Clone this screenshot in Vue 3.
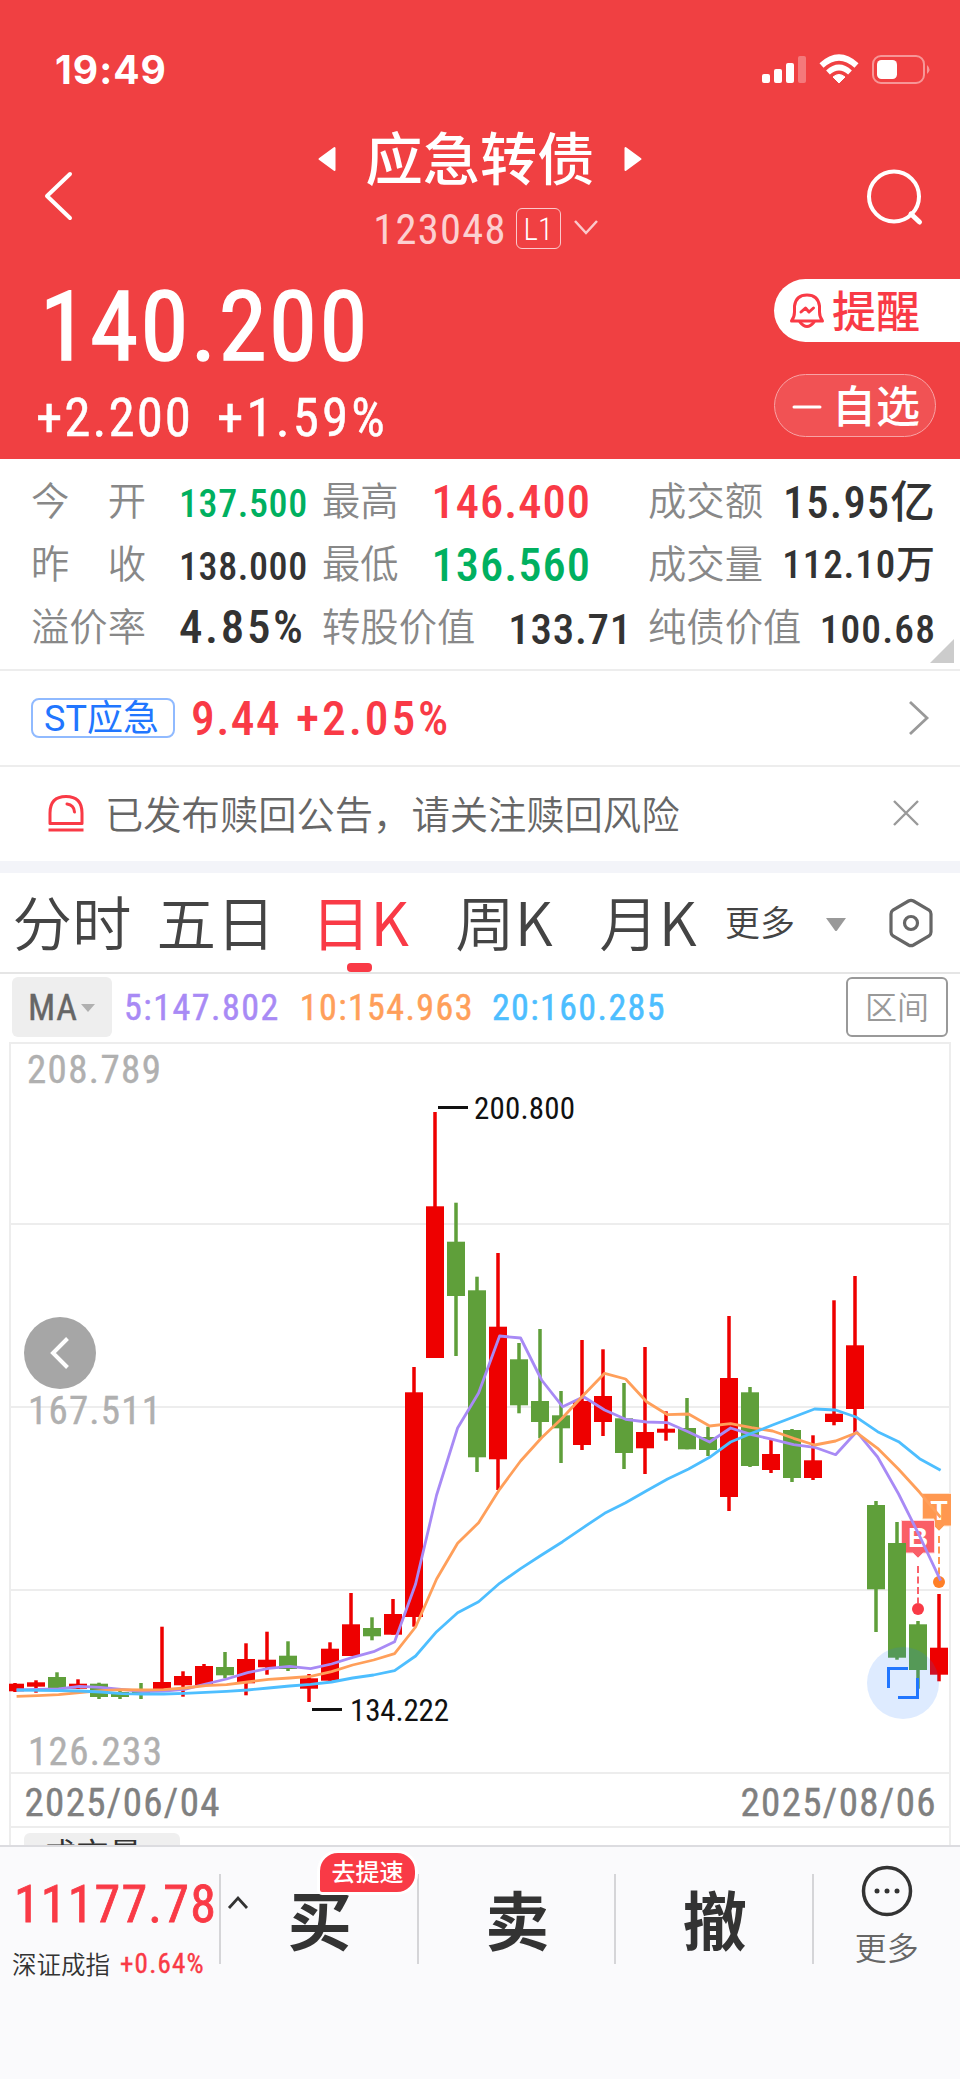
<template>
  <div class="page">
    <header class="header">
      <div class="status-bar">
        <span class="time">19:49</span>
        <svg class="status-icons" width="172" height="34" viewBox="0 0 172 34">
          <g fill="#fff">
            <rect x="2" y="22" width="8" height="9" rx="2" />
            <rect x="14" y="17" width="8" height="14" rx="2" />
            <rect x="26" y="11" width="8" height="20" rx="2" />
            <rect x="38" y="4" width="8" height="27" rx="2" opacity="0.3" />
            <path d="M79 31 L73 25 Q79 20 85 25 Z" stroke="#fff" stroke-linejoin="round" />
          </g>
          <path d="M68 20.5 Q79 10.5 90 20.5" fill="none" stroke="#fff" stroke-width="5.6" />
          <path d="M61.5 13.5 Q79 -2.5 96.5 13.5" fill="none" stroke="#fff" stroke-width="6" />
          <rect x="113" y="4" width="51" height="27" rx="8" fill="none" stroke="#fff" stroke-width="2" opacity="0.45" />
          <rect x="117" y="8" width="20" height="19" rx="4.5" fill="#fff" />
          <path d="M167 13 q5 4.500 0 9 z" fill="#fff" opacity="0.45" />
        </svg>
      </div>

      <div class="title-bar">
        <svg width="40" height="60" viewBox="0 0 40 60">
          <path d="M33 8 L10 30 L33 52" fill="none" stroke="#fff" stroke-width="4" stroke-linecap="round" stroke-linejoin="round" />
        </svg>
        <div class="title-main">
          <div class="title-row">
            <svg width="18" height="28" viewBox="0 0 18 28">
              <path d="M16.500 3 V25 L1.500 14 Z" fill="#fff" stroke="#fff" stroke-width="2" stroke-linejoin="round" />
            </svg>
            <h1>应急转债</h1>
            <svg width="18" height="28" viewBox="0 0 18 28">
              <path d="M1.500 3 V25 L16.500 14 Z" fill="#fff" stroke="#fff" stroke-width="2" stroke-linejoin="round" />
            </svg>
          </div>
          <div class="code-row">
            <span class="num code">123048</span>
            <span class="level num">L1</span>
            <svg width="26" height="18" viewBox="0 0 26 18">
              <path d="M2 2 L13 14 L24 2" fill="none" stroke="#fbc9cb" stroke-width="2.500" />
            </svg>
          </div>
        </div>
        <svg width="62" height="62" viewBox="0 0 62 62">
          <circle cx="30" cy="30.500" r="25" fill="none" stroke="#fff" stroke-width="4" />
          <path d="M47 48 L55.500 56" stroke="#fff" stroke-width="5" stroke-linecap="round" />
        </svg>
      </div>

      <div class="quote">
        <div>
          <div class="num price">140.200</div>
          <div class="change">
            <span class="num">+2.200</span>
            <span class="num percent">+1.59%</span>
          </div>
        </div>
        <div class="actions">
          <div class="action remind">
            <svg width="36" height="38" viewBox="0 0 36 38">
              <g fill="none" stroke="#f93a46" stroke-width="3" stroke-linecap="round" stroke-linejoin="round">
                <path d="M2.500 29 Q5.500 25 5.500 20 V14 Q7 3 18 3 Q29 3 30.500 14 V20 Q30.500 25 33.500 29 Z" />
                <path d="M11 30 Q18 39 25 30" />
                <path d="M12 20 L16.500 16 L20 20 L24.500 16" />
              </g>
            </svg>
            <span>提醒</span>
          </div>
          <div class="action watch">
            <svg width="36" height="38" viewBox="0 0 36 38">
              <path d="M5 20 H31" stroke="#fff" stroke-width="3" stroke-linecap="round" />
            </svg>
            <span>自选</span>
          </div>
        </div>
      </div>
    </header>

    <section class="stats">
      <div v-for="(row, r) in stats" :key="r" class="stats-row">
        <div v-for="cell in row" :key="cell.label" class="stat">
          <span class="stat-label" :class="{ spread: cell.spread }">
            <i v-for="ch in cell.label" :key="ch">{{ ch }}</i>
          </span>
          <span class="num stat-value" :class="[cell.size, cell.color]">{{ cell.value }}</span>
        </div>
      </div>
      <span class="corner"></span>
    </section>

    <section class="stock">
      <span class="tag">ST应急</span>
      <span class="num stock-price">9.44</span>
      <span class="num stock-change">+2.05%</span>
      <svg class="push" width="22" height="36" viewBox="0 0 22 36">
        <path d="M2 2 L19 18 L2 34" fill="none" stroke="#999" stroke-width="2.800" />
      </svg>
    </section>

    <section class="notice">
      <svg width="38" height="38" viewBox="0 0 38 38">
        <g fill="none" stroke="#f93a46" stroke-width="3">
          <path d="M3 29.500 V19 Q3 2.500 19 2.500 Q35 2.500 35 19 V29.500 Z" stroke-linejoin="round" />
          <path d="M1.500 36 H36.500" />
          <path d="M20 10 Q27 11 27.500 18" stroke-linecap="round" />
        </g>
      </svg>
      <span class="notice-text">已发布赎回公告，请关注赎回风险</span>
      <svg class="push" width="30" height="30" viewBox="0 0 30 30">
        <path d="M3 3 L27 27 M27 3 L3 27" stroke="#999" stroke-width="2.400" />
      </svg>
    </section>

    <nav class="tabs">
      <span v-for="tab in tabs" :key="tab" class="tab" :class="{ active: tab === activeTab }">{{ tab }}</span>
      <span class="tab-more">更多</span>
      <svg class="tab-caret" width="22" height="16" viewBox="0 0 22 16">
        <path d="M1 2 H21 L12 14.500 Q11 15.500 10 14.500 Z" fill="#999" />
      </svg>
      <svg width="46" height="50" viewBox="0 0 46 50">
        <path d="M20.500 3 Q23 1.700 25.500 3 L41 12 Q43 13.500 43 16 V34 Q43 36.500 41 38 L25.500 47 Q23 48.300 20.500 47 L5 38 Q3 36.500 3 34 V16 Q3 13.500 5 12 Z" fill="none" stroke="#666" stroke-width="3.200" />
        <circle cx="23" cy="25" r="6.500" fill="none" stroke="#666" stroke-width="3.200" />
      </svg>
    </nav>

    <section class="indicators">
      <span class="ma-button num">
        MA
        <svg width="16" height="10" viewBox="0 0 16 10"><path d="M1 1 H15 L8 9 Z" fill="#b0b0b0" /></svg>
      </span>
      <span class="num ma ma5">5:147.802</span>
      <span class="num ma ma10">10:154.963</span>
      <span class="num ma ma20">20:160.285</span>
      <span class="range">区间</span>
    </section>

    <section class="chart">
      <svg width="960" height="806" viewBox="0 1040 960 806">
        <defs>
          <clipPath id="plot"><rect x="9" y="1041" width="942" height="806" /></clipPath>
        </defs>
        <g stroke="#ededed" stroke-width="2">
          <path d="M10 1846 V1043 H950 V1846" fill="none" />
          <path v-for="y in gridLines" :key="y" :d="`M10 ${y} H950`" />
        </g>

        <g class="axis">
          <text x="27" y="1083" textLength="134">208.789</text>
          <text x="28" y="1424" textLength="133">167.511</text>
          <text x="28" y="1765" textLength="134">126.233</text>
          <text class="date" x="24.500" y="1816" textLength="195">2025/06/04</text>
          <text class="date" x="740.500" y="1816" textLength="195">2025/08/06</text>
        </g>

        <g clip-path="url(#plot)">
          <!-- trade markers -->
          <g stroke-width="2" stroke-dasharray="7 3.500">
            <path d="M939 1536 V1576" stroke="#ff9850" />
            <path d="M918 1566 V1603" stroke="#f9616b" />
          </g>
          <path d="M922.500 1493.500 H955 V1526 H944 L939 1531 L934 1526 V1519 H922.500 Z" fill="#ff9850" stroke="#ffe3cf" />
          <text class="mark" x="939" y="1520">T</text>
          <path d="M901.500 1520.500 H934.500 V1553 H923 L918 1558 L913 1553 H901.500 Z" fill="#f93a46" fill-opacity="0.82" stroke="#ffd9dc" />
          <text class="mark" x="918" y="1547">B</text>
          <circle cx="939" cy="1582" r="6" fill="#ff7f27" />
          <circle cx="918" cy="1609" r="6" fill="#f93a46" />

          <g v-for="c in candles" :key="c.x" :fill="c.color">
            <rect :x="c.x - 1.75" :y="c.high" width="3.500" :height="c.low - c.high" />
            <rect :x="c.x - 9" :y="c.top" width="18" :height="c.bottom - c.top" />
          </g>
          <polyline v-for="line in averages" :key="line.color" :points="line.points" fill="none" :stroke="line.color" stroke-width="2.800" stroke-linejoin="round" />
        </g>

        <g class="peak">
          <path d="M438 1107.500 H468 M312 1709.500 H342" stroke="#111" stroke-width="3" />
          <text x="474" y="1119" textLength="101">200.800</text>
          <text x="350" y="1721" textLength="99">134.222</text>
        </g>

        <circle cx="60" cy="1353" r="36" fill="#a6a6a6" />
        <path d="M67.500 1338.500 L53 1353 L67.500 1367.500" fill="none" stroke="#fff" stroke-width="4" />

        <circle cx="903" cy="1683" r="36" fill="#2176ff" fill-opacity="0.15" />
        <path d="M888.500 1688 V1668.500 H908 M917.500 1678 V1697.500 H898" fill="none" stroke="#2176ff" stroke-width="3" />

        <rect x="24" y="1833" width="156" height="40" rx="6" fill="#efefef" />
        <text class="volume" x="43" y="1867">成交量</text>
      </svg>
    </section>

    <footer class="footer">
      <div class="index">
        <span class="num index-value">11177.78</span>
        <div class="index-sub">
          <span>深证成指</span>
          <span class="num index-change">+0.64%</span>
        </div>
      </div>
      <div class="trade buy">
        <svg class="expand" width="22" height="16" viewBox="0 0 22 16">
          <path d="M2 14 L11 4 L20 14" fill="none" stroke="#333" stroke-width="2.800" />
        </svg>
        买
        <span class="badge">去提速</span>
      </div>
      <div class="trade">卖</div>
      <div class="trade">撤</div>
      <div class="more">
        <svg width="54" height="54" viewBox="0 0 54 54">
          <circle cx="27" cy="27" r="23.500" fill="none" stroke="#333" stroke-width="3.500" />
          <g fill="#333">
            <circle cx="17" cy="27" r="2.500" />
            <circle cx="27" cy="27" r="2.500" />
            <circle cx="37" cy="27" r="2.500" />
          </g>
        </svg>
        <span>更多</span>
      </div>
    </footer>
  </div>
</template>

<script setup>
import { ref } from 'vue'

const tabs = ['分时', '五日', '日K', '周K', '月K']
const activeTab = ref('日K')

const stats = [
  [
    { label: '今开', value: '137.500', size: 's38', color: 'down', spread: true },
    { label: '最高', value: '146.400', size: 's47', color: 'up' },
    { label: '成交额', value: '15.95亿', size: 's45' },
  ],
  [
    { label: '昨收', value: '138.000', size: 's38', spread: true },
    { label: '最低', value: '136.560', size: 's47', color: 'down' },
    { label: '成交量', value: '112.10万', size: 's39' },
  ],
  [
    { label: '溢价率', value: '4.85%', size: 's46' },
    { label: '转股价值', value: '133.71', size: 's43' },
    { label: '纯债价值', value: '100.68', size: 's40' },
  ],
]

const gridLines = [1224, 1407, 1590, 1773, 1827]

// [direction, body top, body bottom, wick top, wick bottom]
const bars = [
  [1, 1683.7, 1691.3, 1683, 1692],
  [1, 1682.3, 1686.7, 1680.3, 1692.7],
  [0, 1677, 1688, 1672.3, 1688],
  [1, 1683.7, 1688.7, 1679.3, 1688.7],
  [0, 1683.7, 1697, 1682.7, 1699],
  [0, 1692, 1697, 1690, 1699],
  [0, 1691.3, 1694, 1683, 1699],
  [1, 1682, 1690, 1626.7, 1690],
  [1, 1676, 1685.3, 1671.3, 1696.7],
  [1, 1666, 1685.3, 1664, 1685.3],
  [0, 1667, 1675.3, 1652, 1678.3],
  [1, 1659, 1683.3, 1643.3, 1695.3],
  [1, 1659.7, 1667.3, 1631.7, 1674.7],
  [0, 1655.7, 1669, 1641.3, 1671],
  [1, 1678.3, 1688.7, 1674, 1702],
  [1, 1648.7, 1680.7, 1642.3, 1682.7],
  [1, 1624.3, 1656, 1593, 1656],
  [0, 1628, 1636.3, 1617.3, 1640.3],
  [1, 1614, 1634.7, 1599, 1634.7],
  [1, 1392.3, 1617, 1367, 1626.7],
  [1, 1206.3, 1358, 1112, 1358],
  [0, 1241.7, 1296, 1202.7, 1356],
  [0, 1290.3, 1457.3, 1276.7, 1472],
  [1, 1326.7, 1459.3, 1253, 1490],
  [0, 1359.3, 1405.3, 1343, 1413.3],
  [0, 1401, 1422, 1329, 1438.3],
  [0, 1415.3, 1428.3, 1391, 1463],
  [1, 1401, 1445, 1340, 1450],
  [1, 1396, 1422, 1349.3, 1436],
  [0, 1418.3, 1453, 1383, 1469],
  [1, 1432, 1448.3, 1347, 1474],
  [1, 1428.7, 1432.7, 1411.3, 1440.7],
  [0, 1428, 1449.3, 1398, 1449.3],
  [0, 1437, 1450, 1426.7, 1456],
  [1, 1378, 1497, 1316, 1511],
  [0, 1392.3, 1466, 1387, 1467],
  [1, 1454, 1470, 1440, 1473],
  [0, 1430, 1478, 1429, 1482],
  [1, 1460.3, 1478, 1435.3, 1480],
  [1, 1413.7, 1422, 1300.3, 1425.3],
  [1, 1345.3, 1409, 1276, 1433.3],
  [0, 1505, 1589.3, 1501, 1632],
  [0, 1543, 1657.7, 1522, 1659.7],
  [0, 1624.3, 1670, 1621, 1688.7],
  [1, 1647.7, 1674.7, 1594, 1681.3],
]

const candles = bars.map(([up, top, bottom, high, low], i) => ({
  x: 15 + i * 21,
  top,
  bottom,
  high,
  low,
  color: up ? '#ee0000' : '#5f9f3a',
}))

const ma5 = [
  1690, 1689.3, 1689, 1686.3, 1687.3, 1689.3, 1691.5, 1691, 1689.3, 1684, 1679, 1672.7, 1668.3, 1666.3, 1668.7,
  1664, 1657.3, 1651.7, 1641.7, 1584, 1495, 1428, 1393, 1336, 1338, 1380, 1406.7, 1396.7, 1410, 1419.3,
  1422, 1422.7, 1432, 1442, 1428, 1434.7, 1439.3, 1444.7, 1447.3, 1454.7, 1431.7, 1457, 1494, 1536, 1580.7,
]
const ma10 = [
  1696.3, 1695.7, 1694.7, 1692.7, 1690.7, 1689.7, 1690, 1689.7, 1688, 1685.7, 1684.7, 1682, 1679.3, 1678, 1676.3,
  1671.7, 1665, 1660, 1653.7, 1627, 1579, 1543.3, 1522.7, 1489.3, 1461, 1437.7, 1417.7, 1395, 1373.3, 1379,
  1401.7, 1414.7, 1414, 1426, 1423.7, 1427.7, 1431, 1438.3, 1445, 1441, 1432.7, 1448.3, 1469.3, 1492.3, 1517.3,
]
const ma20 = [
  1690, 1690.3, 1690.7, 1691, 1692, 1693.7, 1694, 1694, 1693.3, 1692.3, 1691.3, 1690, 1688, 1686, 1684.3,
  1682, 1678, 1675, 1670.7, 1656, 1631.7, 1612.7, 1601.7, 1583.3, 1568.7, 1555, 1541.7, 1527.3, 1513.3, 1502.7,
  1490.7, 1479, 1469, 1457.3, 1442, 1433.3, 1425, 1417, 1409, 1410, 1417.3, 1431.7, 1441.7, 1458.7, 1470.3,
]

const toPoints = (values) => values.map((y, i) => `${(16.6 + i * 21).toFixed(1)},${y}`).join(' ')

const averages = [
  { color: '#a88af5', points: toPoints(ma5) },
  { color: '#ff9f5a', points: toPoints(ma10) },
  { color: '#4dbeff', points: toPoints(ma20) },
]
</script>

<style>
body {
  margin: 0;
  background: #fff;
}
</style>

<style scoped>
.page {
  width: 960px;
  height: 2079px;
  overflow: hidden;
  display: flex;
  flex-direction: column;
  background: #fff;
  color: #333;
  font-family: 'Noto Sans CJK SC', sans-serif;
}

.page > * {
  box-sizing: border-box;
  flex-shrink: 0;
}

svg {
  display: block;
  flex-shrink: 0;
}

.num {
  font-family: 'Roboto Condensed', Roboto, 'Noto Sans CJK SC', sans-serif;
  line-height: 1;
  white-space: nowrap;
}

/* Header */
.header {
  height: 459px;
  background: #f04042;
  color: #fff;
}

.status-bar {
  display: flex;
  justify-content: space-between;
  align-items: flex-start;
  height: 120px;
  padding: 51px 28px 0 55px;
  box-sizing: border-box;
}

.time {
  font: 700 39px/38px Inter, sans-serif;
  letter-spacing: 1px;
}

.status-icons {
  margin-top: 1px;
}

.title-bar {
  display: flex;
  justify-content: space-between;
  height: 139px;
  padding: 0 34px 0 37px;
}

.title-bar > svg {
  margin-top: 46px;
}

.title-bar > svg:first-child {
  margin-right: 19px;
}

.title-row {
  display: flex;
  justify-content: center;
  align-items: center;
  gap: 30px;
  height: 78px;
}

.title-row h1 {
  margin: -8px 0 0;
  font-size: 57.2px;
  font-weight: 500;
  line-height: 78px;
}

.code-row {
  display: flex;
  align-items: center;
  justify-content: center;
  height: 60px;
  padding-left: 12px;
}

.code {
  font-size: 42.5px;
  font-weight: 400;
  letter-spacing: 1.3px;
  color: #fcd0d1;
  margin-top: 4px;
}

.level {
  width: 43px;
  height: 39px;
  margin: 0 12px 0 9px;
  border: 1.5px solid #fbc9cb;
  border-radius: 6px;
  font-size: 31px;
  font-weight: 300;
  line-height: 41px;
  text-align: center;
}

.quote {
  display: flex;
  justify-content: space-between;
  padding: 20px 0 0 36px;
}

.price {
  height: 97px;
  margin-left: 4px;
  font-size: 97px;
  letter-spacing: 2.4px;
  -webkit-text-stroke: 1.6px #fff;
}

.change {
  display: flex;
  gap: 24px;
  margin-top: 16px;
  font-size: 53px;
}

.change .num {
  letter-spacing: 2px;
  -webkit-text-stroke: 0.5px #fff;
}

.change .percent {
  letter-spacing: 3.1px;
}

.actions {
  display: flex;
  flex-direction: column;
  gap: 32px;
}

.action {
  display: flex;
  align-items: center;
  box-sizing: border-box;
  height: 63px;
  padding-left: 15px;
  font-size: 44px;
  font-weight: 500;
  line-height: 58px;
}

.action span {
  margin: -4px 0 0 7px;
}

.remind {
  width: 186px;
  border-radius: 32px 0 0 32px;
  background: #fff;
  color: #f93a46;
}

.watch {
  width: 162px;
  padding-left: 14px;
  border: 1.5px solid #f8a3a5;
  border-radius: 32px;
  background: #f15254;
}

/* Key figures */
.stats {
  position: relative;
  height: 212px;
  padding: 10px 25px 0 31px;
  border-bottom: 2px solid #ededed;
}

.stats-row {
  display: grid;
  grid-template-columns: 291px 326px 288px;
  height: 63px;
}

.stat {
  display: flex;
  align-items: center;
  justify-content: space-between;
}

.stat-label {
  display: flex;
  margin-top: -4px;
  font-size: 38.3px;
  font-weight: 350;
  line-height: 56px;
  color: #888;
}

.stat-label i {
  font-style: normal;
}

.spread {
  width: 115px;
  justify-content: space-between;
}

.stat-value {
  font-weight: 500;
}

.stat:nth-child(1) .stat-value {
  width: 143px;
}

.stat:nth-child(2) .stat-value {
  margin-right: 16px;
}

.stats-row:nth-child(-n + 2) .stat:nth-child(2) .stat-value {
  margin-right: 57px;
}

.s38 {
  font-size: 38px;
  letter-spacing: 0.6px;
  margin-top: 6px;
}

.s39 {
  font-size: 39px;
  letter-spacing: 0.9px;
  margin-top: 4px;
}

.s40 {
  font-size: 39.5px;
  letter-spacing: 1.1px;
  margin-top: 6px;
}

.s43 {
  font-size: 43px;
  letter-spacing: 0.7px;
  margin-top: 5px;
}

.s45 {
  font-size: 44.5px;
  letter-spacing: 1.2px;
  margin-top: 6px;
}

.s46 {
  font-size: 47px;
  letter-spacing: 2.6px;
}

.s47 {
  font-size: 46.5px;
  letter-spacing: 1px;
  margin-top: 4px;
}

.up {
  color: #f93a46;
}

.down {
  color: #00b060;
}

.corner {
  position: absolute;
  right: 6px;
  bottom: 6px;
  border-left: 24px solid transparent;
  border-bottom: 24px solid #ccc;
}

/* Underlying stock */
.stock {
  display: flex;
  align-items: center;
  height: 96px;
  padding: 0 30px 0 31px;
  border-bottom: 2px solid #ededed;
  color: #f93a46;
}

.tag {
  box-sizing: border-box;
  width: 144px;
  height: 40px;
  margin-right: 16px;
  padding-right: 3px;
  border: 2px solid #90baff;
  border-radius: 8px;
  color: #2176ff;
  font-family: Roboto, 'Noto Sans CJK SC', sans-serif;
  font-size: 36px;
  line-height: 39px;
  text-align: center;
  white-space: nowrap;
}

.stock-price,
.stock-change {
  font-size: 47.5px;
  font-weight: 500;
  letter-spacing: 1.4px;
  margin-top: 4px;
}

.stock-change {
  margin-left: 15px;
  letter-spacing: 2.9px;
}

.push {
  margin-left: auto;
}

/* Notice */
.notice {
  display: flex;
  align-items: center;
  height: 106px;
  padding: 0 39px 2px 47px;
  border-bottom: 12px solid #f3f4f9;
}

.notice-text {
  margin: -1px 0 0 20px;
  font-size: 38.3px;
  font-weight: 350;
  color: #666;
}

/* Period tabs */
.tabs {
  display: flex;
  align-items: center;
  height: 101px;
  padding: 0 26px 0 0;
  border-bottom: 2px solid #e5e5e5;
}

.tab {
  position: relative;
  width: 144px;
  height: 99px;
  color: #444;
  font-size: 59.5px;
  line-height: 94px;
  font-weight: 350;
  text-align: center;
}

.tab.active {
  color: #f93a46;
  font-weight: 400;
}

.tab.active::after {
  content: '';
  position: absolute;
  left: 59px;
  bottom: 0;
  width: 25px;
  height: 9px;
  border-radius: 4px;
  background: #f93a46;
}

.tab-more {
  margin: -5px 0 0 5px;
  font-size: 35px;
  font-weight: 350;
  color: #444;
}

.tab-caret {
  margin: 2px auto 0 30px;
}

/* Moving averages */
.indicators {
  display: flex;
  align-items: center;
  height: 66px;
  padding: 0 12px;
}

.ma-button {
  display: flex;
  align-items: center;
  gap: 2px;
  box-sizing: border-box;
  width: 100px;
  height: 60px;
  margin-right: 12px;
  padding: 2px 0 0 16px;
  border-radius: 6px;
  background: #eee;
  color: #666;
  font-size: 36px;
  letter-spacing: 0.8px;
  -webkit-text-stroke: 0.4px #666;
}

.ma {
  margin: 2px 18px 0 0;
  font-size: 36px;
  letter-spacing: 1.4px;
  -webkit-text-stroke: 0.5px currentColor;
}

.ma5 {
  margin-right: 20px;
  letter-spacing: 1.5px;
  color: #a88af5;
}

.ma10 {
  color: #ff9f5a;
}

.ma20 {
  color: #4dbeff;
}

.range {
  box-sizing: border-box;
  width: 102px;
  height: 60px;
  margin-left: auto;
  border: 2px solid #999;
  border-radius: 6px;
  color: #999;
  font-size: 32px;
  font-weight: 350;
  line-height: 53px;
  text-align: center;
}

/* Chart */
.chart {
  height: 805px;
  overflow: hidden;
}

.chart text {
  font-family: 'Roboto Condensed', Roboto, sans-serif;
}

.axis text {
  fill: #b0b0b0;
  font-size: 39px;
  stroke: #b0b0b0;
  stroke-width: 0.4px;
}

.axis .date {
  fill: #808080;
  stroke: #808080;
}

.peak text {
  fill: #111;
  font-size: 31px;
  font-weight: 400;
}

.chart .mark {
  fill: #fff;
  font-family: 'Liberation Sans', sans-serif;
  font-size: 28px;
  font-weight: 700;
  text-anchor: middle;
}

.chart .volume {
  fill: #333;
  font-family: 'Noto Sans CJK SC', sans-serif;
  font-size: 33px;
}

/* Bottom bar */
.footer {
  display: flex;
  height: 234px;
  padding-top: 27px;
  border-top: 2px solid #dcdce0;
  background: #fafafc;
}

.index {
  box-sizing: border-box;
  width: 221px;
  height: 90px;
  padding: 5px 0 0 12px;
  border-right: 2px solid #d5d5d8;
}

.index-value {
  display: block;
  margin-left: 2px;
  color: #f93a46;
  font-size: 52px;
  letter-spacing: 1.2px;
  -webkit-text-stroke: 0.8px #f93a46;
}

.index-sub {
  display: flex;
  gap: 10px;
  align-items: center;
  margin-top: 15px;
  font-size: 24.5px;
  font-weight: 350;
  line-height: 36px;
}

.index-change {
  margin-top: 1px;
  color: #f93a46;
  font-size: 27px;
  font-weight: 400;
  letter-spacing: 1.2px;
  -webkit-text-stroke: 0.4px #f93a46;
}

.trade {
  position: relative;
  box-sizing: border-box;
  width: 197.5px;
  height: 90px;
  padding-left: 2px;
  border-right: 2px solid #d5d5d8;
  color: #333;
  font-size: 64px;
  font-weight: 700;
  line-height: 86px;
  text-align: center;
}

.expand {
  position: absolute;
  left: 6px;
  top: 20px;
}

.badge {
  position: absolute;
  left: 96px;
  top: -24px;
  width: 101px;
  height: 45px;
  box-sizing: border-box;
  border: 3px solid #fff;
  border-radius: 21px 21px 21px 5px;
  background: #f93a46;
  color: #fff;
  font-size: 24px;
  font-weight: 500;
  line-height: 35px;
}

.more {
  display: flex;
  flex: 1;
  flex-direction: column;
  align-items: center;
  margin-top: -10px;
  font-size: 32px;
  font-weight: 350;
  line-height: 44px;
  color: #666;
}

.more span {
  margin-top: 6px;
}
</style>
